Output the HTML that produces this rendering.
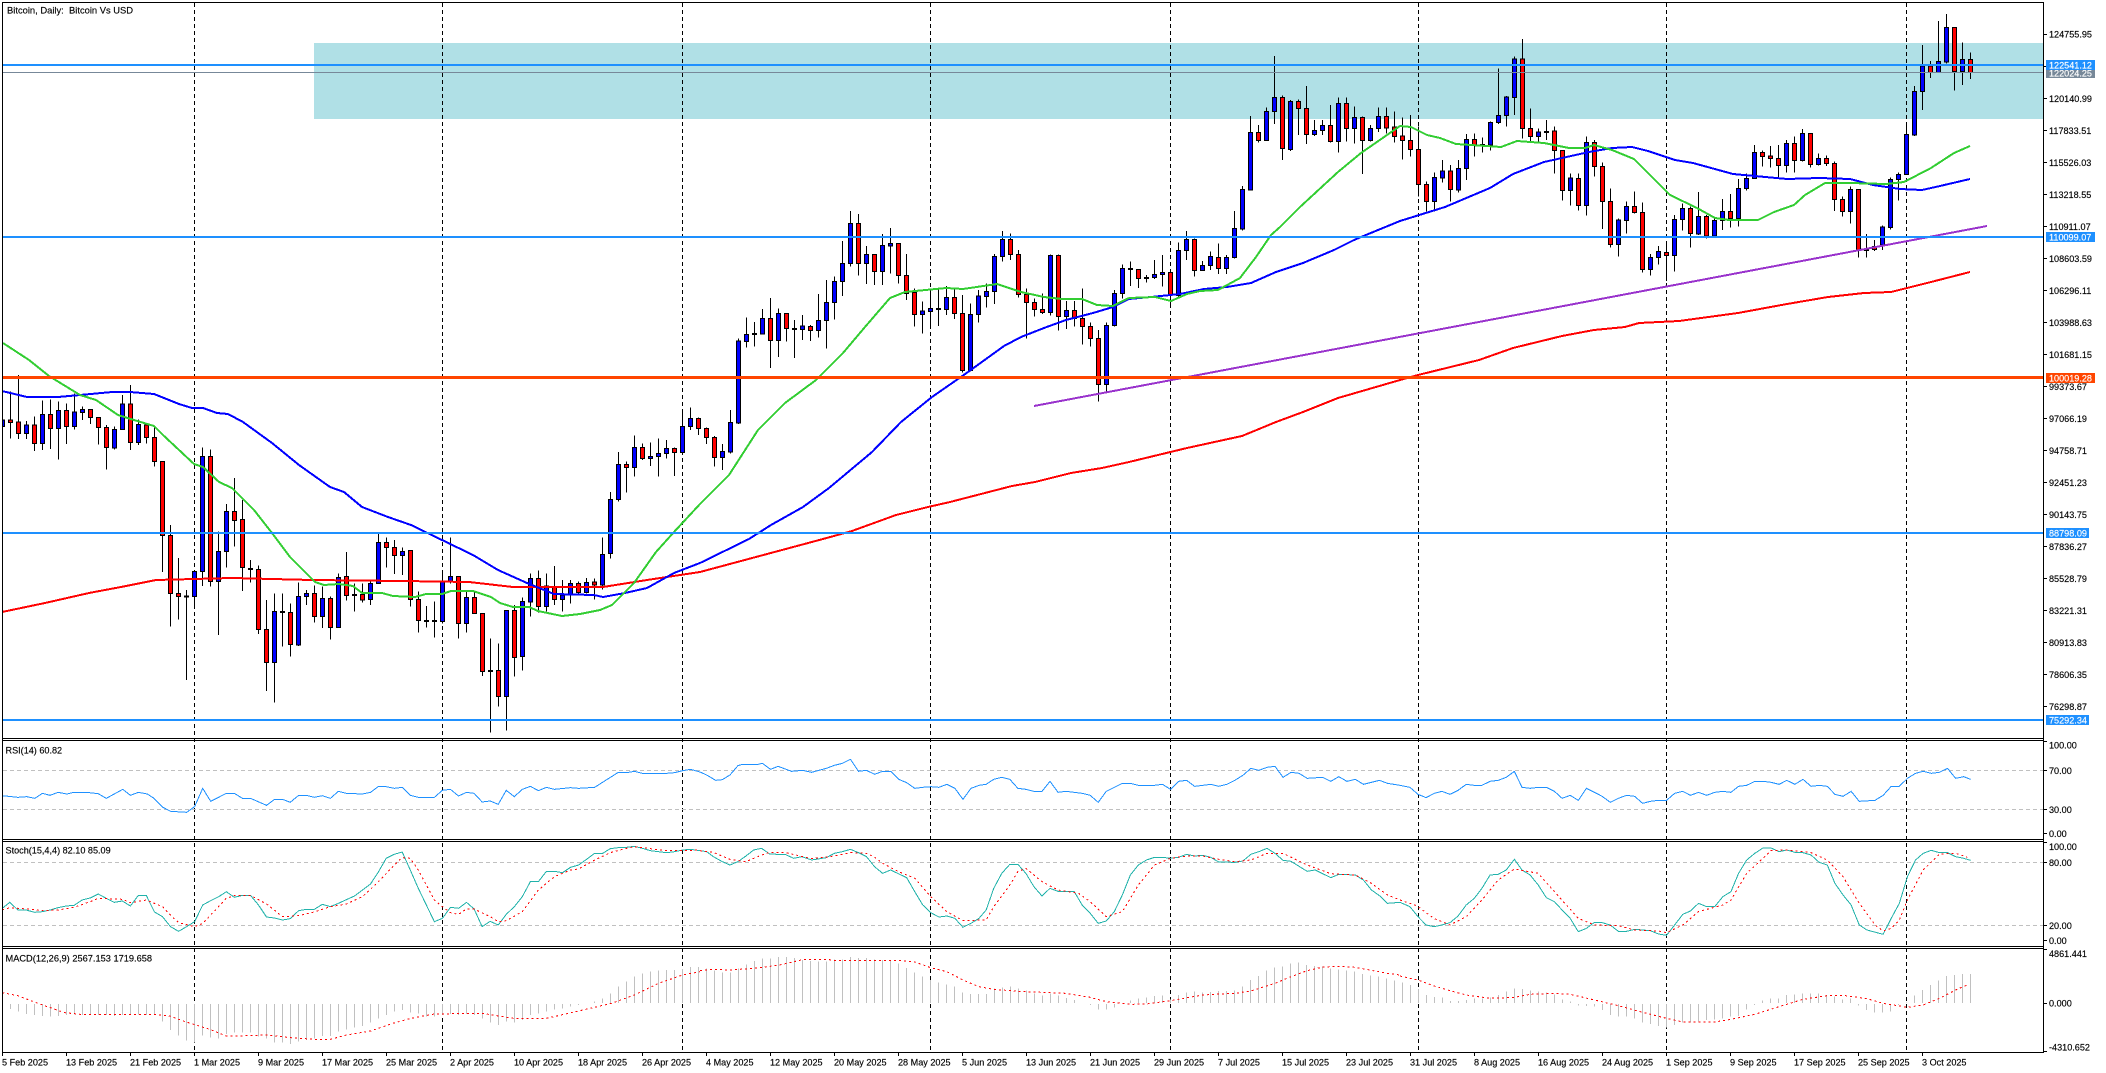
<!DOCTYPE html>
<html><head><meta charset="utf-8"><title>Bitcoin, Daily</title>
<style>
html,body{margin:0;padding:0;background:#fff;width:2106px;height:1073px;overflow:hidden}
svg{display:block;position:absolute;left:0;top:0}
svg *{vector-effect:non-scaling-stroke;shape-rendering:crispEdges}
text{font:9.1px "Liberation Sans",sans-serif;fill:#000;stroke:#000;stroke-width:.15;shape-rendering:auto}
.w{fill:#fff}
polyline{fill:none}
.k{stroke:#000;stroke-width:1;fill:none}
.b{stroke:#000;stroke-width:1;fill:#00f}
.r{stroke:#000;stroke-width:1;fill:#f00}
.rd{stroke:#f00;stroke-width:1;stroke-dasharray:2 3}
.sm{stroke:#20b2aa;stroke-width:1}
.rs{stroke:#1e90ff;stroke-width:1}
.lv{stroke:#c0c0c0;stroke-width:1;stroke-dasharray:4 3;fill:none}
</style></head><body>
<svg width="2106" height="1073" viewBox="0 0 2106 1073" xmlns="http://www.w3.org/2000/svg">
<rect x="314" y="43" width="1729" height="76" fill="#b0e0e6"/>
<path d="M194.5 3V1052M442.5 3V1052M682.5 3V1052M930.5 3V1052M1170.5 3V1052M1418.5 3V1052M1666.5 3V1052M1906.5 3V1052" stroke="#000" stroke-width="1" stroke-dasharray="4 3" fill="none"/>

<g transform="matrix(1 0 0 .33333 0 360)">
<path class="k" d="M2.5 170V205M10.5 95V235M18.5 45V237M26.5 183V237M34.5 170V273M42.5 122V270M50.5 118V267M58.5 125V299M66.5 130V252M74.5 100V208M82.5 140V180M90.5 148V192M98.5 172V254M106.5 195V329M114.5 200V269M122.5 105V210M130.5 75V270M138.5 178V255M146.5 190V250M154.5 200V320M162.5 304V636M170.5 495V800M178.5 594V778M186.5 690V960M194.5 630V735M202.5 262V678M210.5 268V680M218.5 514V825M226.5 432V622M234.5 354V560M242.5 420V693M250.5 600V668M258.5 617V822M266.5 720V993M274.5 700V1028M282.5 700V860M290.5 730V890M298.5 668V858M306.5 690V735M314.5 676V788M322.5 680V804M330.5 710V838M338.5 640V803M346.5 576V722M354.5 670V755M362.5 670V728M370.5 660V735M378.5 522V672M386.5 532V622M394.5 540V642M402.5 562V645M410.5 571V740M418.5 695V818M426.5 738V802M434.5 725V833M442.5 640V790M450.5 532V670M458.5 648V836M466.5 695V818M474.5 695V762M482.5 760V948M490.5 835V1118M498.5 850V1040M506.5 751V1112M514.5 735V950M522.5 712V932M530.5 640V770M538.5 632V758M546.5 640V755M554.5 618V735M562.5 660V755M570.5 660V730M578.5 664V705M586.5 654V700M594.5 655V718M602.5 532V688M610.5 396V596M618.5 276V425M626.5 305V398M634.5 226V350M642.5 250V300M650.5 248V318M658.5 236V350M666.5 240V295M674.5 262V348M682.5 152V280M690.5 142V210M698.5 172V225"/>
<path class="b" d="M.5 180h4V200h-4zM24.5 195h4V221h-4zM40.5 163h4V251h-4zM56.5 151h4V206h-4zM72.5 156h4V200h-4zM80.5 148h4V158h-4zM112.5 208h4V264h-4zM120.5 132h4V208h-4zM136.5 193h4V248h-4zM192.5 634h4V710h-4zM200.5 289h4V635h-4zM216.5 574h4V665h-4zM224.5 454h4V575h-4zM272.5 754h4V908h-4zM296.5 709h4V855h-4zM304.5 700h4V710h-4zM320.5 715h4V770h-4zM336.5 652h4V803h-4zM368.5 670h4V719h-4zM376.5 547h4V670h-4zM400.5 574h4V587h-4zM440.5 665h4V785h-4zM448.5 649h4V665h-4zM464.5 712h4V791h-4zM504.5 751h4V1010h-4zM520.5 724h4V890h-4zM528.5 655h4V726h-4zM544.5 678h4V740h-4zM560.5 705h4V719h-4zM568.5 670h4V705h-4zM584.5 667h4V697h-4zM600.5 583h4V675h-4zM608.5 418h4V581h-4zM616.5 313h4V419h-4zM632.5 262h4V322h-4zM648.5 289h4V295h-4zM656.5 280h4V290h-4zM664.5 265h4V281h-4zM680.5 199h4V277h-4zM688.5 175h4V200h-4z"/>
<path class="r" d="M8.5 180h4V188h-4zM16.5 186h4V221h-4zM32.5 195h4V250h-4zM48.5 163h4V206h-4zM64.5 151h4V200h-4zM88.5 148h4V173h-4zM96.5 172h4V203h-4zM104.5 202h4V263h-4zM128.5 132h4V248h-4zM144.5 195h4V233h-4zM152.5 232h4V305h-4zM160.5 304h4V527h-4zM168.5 526h4V700h-4zM176.5 700h4V710h-4zM184.5 708h4V711h-4zM208.5 289h4V664h-4zM232.5 454h4V482h-4zM240.5 478h4V622h-4zM248.5 625h4V629h-4zM256.5 628h4V808h-4zM264.5 808h4V907h-4zM280.5 754h4V758h-4zM288.5 757h4V854h-4zM312.5 700h4V770h-4zM328.5 715h4V803h-4zM344.5 649h4V707h-4zM352.5 703h4V707h-4zM360.5 703h4V720h-4zM384.5 547h4V563h-4zM392.5 562h4V587h-4zM408.5 571h4V718h-4zM416.5 718h4V782h-4zM424.5 781h4V784h-4zM432.5 781h4V785h-4zM456.5 649h4V791h-4zM472.5 712h4V760h-4zM480.5 760h4V935h-4zM488.5 931h4V935h-4zM496.5 931h4V1010h-4zM512.5 751h4V893h-4zM536.5 655h4V739h-4zM552.5 680h4V719h-4zM576.5 670h4V697h-4zM592.5 666h4V675h-4zM624.5 313h4V323h-4zM640.5 262h4V295h-4zM672.5 265h4V278h-4zM696.5 175h4V205h-4z"/>
</g>

<g transform="matrix(1 0 0 .33333 0 240)">
<path class="k" d="M706.5 562V612M714.5 588V680M722.5 612V690M730.5 510V640M738.5 296V552M746.5 232V322M754.5 246V320M762.5 207V282M770.5 174V384M778.5 205V351M786.5 220V305M794.5 240V354M802.5 225V300M810.5 255V303M818.5 162V292M826.5 120V326M834.5 110V238"/>
<path class="b" d="M720.5 634h4V653h-4zM728.5 547h4V636h-4zM736.5 303h4V549h-4zM744.5 283h4V305h-4zM760.5 235h4V282h-4zM776.5 220h4V302h-4zM800.5 258h4V269h-4zM816.5 241h4V272h-4zM824.5 187h4V242h-4zM832.5 124h4V188h-4z"/>
<path class="r" d="M704.5 565h4V593h-4zM712.5 592h4V653h-4zM752.5 280h4V284h-4zM768.5 235h4V302h-4zM784.5 220h4V265h-4zM792.5 265h4V269h-4zM808.5 259h4V272h-4z"/>
</g>

<g transform="matrix(1 0 0 .33333 0 0)">
<path class="k" d="M842.5 723V888M850.5 633V800M858.5 642V827M866.5 738V852M874.5 763V855M882.5 702V855M890.5 684V820M898.5 730V850M906.5 762V900M914.5 865V980M922.5 905V1000M930.5 875V975M938.5 865V978M946.5 858V945M954.5 868V957M962.5 885V1118M970.5 910V1115M978.5 870V968M986.5 850V922M994.5 762V912M1002.5 693V785M1010.5 700V780M1018.5 750V893M1026.5 865V1015M1034.5 895V950M1042.5 880V942M1050.5 764V947M1058.5 764V992M1066.5 903V987M1074.5 903V980M1082.5 865V1033M1090.5 967V1040M1098.5 990V1205M1106.5 967V1175M1114.5 870V980M1122.5 793V895M1130.5 785V858M1138.5 808V864M1146.5 825V848M1154.5 780V837M1162.5 765V860M1170.5 815V920M1178.5 727V890M1186.5 693V780M1194.5 716V830M1202.5 783V813M1210.5 755V810M1218.5 730V822M1226.5 765V822M1234.5 633V775M1242.5 558V692M1250.5 348V572M1258.5 375V428M1266.5 322V423M1274.5 168V372M1282.5 287V480M1290.5 300V453M1298.5 298V405M1306.5 258V432M1314.5 360V408M1322.5 360V405M1330.5 315V428M1338.5 292V458M1346.5 292V425M1354.5 320V430M1362.5 350V522M1370.5 375V425M1378.5 322V396M1386.5 322V400M1394.5 335V428M1402.5 352V478M1410.5 345V470M1418.5 380V590M1426.5 545V635M1434.5 518V635M1442.5 480V548M1450.5 495V605M1458.5 480V578M1466.5 402V540M1474.5 400V470M1482.5 412V458M1490.5 365V452M1498.5 205V372M1506.5 288V380M1514.5 170V345M1522.5 117V415M1530.5 326V425M1538.5 385V425M1546.5 360V420M1554.5 380V520M1562.5 451V602M1570.5 520V617M1578.5 520V632M1586.5 410V647M1594.5 420V530M1602.5 488V687M1610.5 565V743M1618.5 656V770M1626.5 605V700M1634.5 575V640M1642.5 607V818M1650.5 762V827M1658.5 738V793M1666.5 725V843M1674.5 645V815M1682.5 610V692M1690.5 620V743M1698.5 576V705M1706.5 645V715M1714.5 650V710M1722.5 597V690M1730.5 582V683M1738.5 537V680M1746.5 520V572M1754.5 435V537M1762.5 452V500M1770.5 438V502M1778.5 435V531M1786.5 420V518M1794.5 410V518M1802.5 387V485M1810.5 400V502M1818.5 460V496M1826.5 466V498M1834.5 484V633M1842.5 590V650M1850.5 560V670M1858.5 568V773M1866.5 702V773M1874.5 720V753M1882.5 676V750M1890.5 532V688M1898.5 517V602M1906.5 366V524M1914.5 258V408M1922.5 135V330M1930.5 183V234M1938.5 63V218M1946.5 42V190M1954.5 82V272M1962.5 127V255M1970.5 157V237"/>
<path class="b" d="M840.5 790h4V845h-4zM848.5 670h4V791h-4zM864.5 763h4V791h-4zM880.5 736h4V815h-4zM888.5 730h4V738h-4zM920.5 933h4V943h-4zM928.5 925h4V935h-4zM944.5 892h4V929h-4zM968.5 943h4V1112h-4zM976.5 888h4V943h-4zM984.5 874h4V890h-4zM992.5 769h4V875h-4zM1000.5 718h4V769h-4zM1048.5 766h4V938h-4zM1064.5 931h4V949h-4zM1104.5 976h4V1154h-4zM1112.5 880h4V977h-4zM1120.5 805h4V880h-4zM1152.5 823h4V833h-4zM1160.5 817h4V824h-4zM1176.5 751h4V887h-4zM1184.5 718h4V752h-4zM1200.5 796h4V811h-4zM1208.5 769h4V797h-4zM1224.5 772h4V806h-4zM1232.5 685h4V773h-4zM1240.5 568h4V687h-4zM1248.5 397h4V570h-4zM1264.5 334h4V422h-4zM1272.5 292h4V335h-4zM1288.5 304h4V449h-4zM1312.5 391h4V404h-4zM1320.5 376h4V391h-4zM1336.5 310h4V425h-4zM1352.5 352h4V386h-4zM1368.5 385h4V422h-4zM1376.5 349h4V386h-4zM1432.5 532h4V605h-4zM1440.5 513h4V534h-4zM1456.5 505h4V570h-4zM1464.5 418h4V506h-4zM1488.5 367h4V435h-4zM1496.5 346h4V368h-4zM1504.5 291h4V347h-4zM1512.5 177h4V293h-4zM1536.5 396h4V410h-4zM1568.5 534h4V571h-4zM1584.5 427h4V617h-4zM1616.5 660h4V734h-4zM1624.5 619h4V661h-4zM1648.5 772h4V809h-4zM1656.5 754h4V773h-4zM1672.5 658h4V767h-4zM1680.5 625h4V659h-4zM1696.5 649h4V702h-4zM1712.5 662h4V708h-4zM1720.5 634h4V662h-4zM1736.5 566h4V656h-4zM1744.5 535h4V566h-4zM1752.5 457h4V536h-4zM1784.5 430h4V497h-4zM1800.5 400h4V482h-4zM1816.5 475h4V494h-4zM1848.5 568h4V635h-4zM1864.5 748h4V752h-4zM1880.5 681h4V735h-4zM1888.5 538h4V683h-4zM1896.5 523h4V539h-4zM1904.5 403h4V523h-4zM1912.5 274h4V405h-4zM1920.5 198h4V275h-4zM1936.5 184h4V218h-4zM1944.5 82h4V186h-4zM1960.5 178h4V215h-4z"/>
<path class="r" d="M856.5 670h4V790h-4zM872.5 763h4V815h-4zM896.5 730h4V827h-4zM904.5 826h4V880h-4zM912.5 877h4V943h-4zM936.5 925h4V929h-4zM952.5 892h4V940h-4zM960.5 940h4V1112h-4zM1008.5 718h4V763h-4zM1016.5 763h4V884h-4zM1024.5 883h4V907h-4zM1032.5 907h4V928h-4zM1040.5 928h4V938h-4zM1056.5 766h4V949h-4zM1072.5 931h4V955h-4zM1080.5 955h4V980h-4zM1088.5 979h4V1016h-4zM1096.5 1015h4V1154h-4zM1128.5 805h4V809h-4zM1136.5 808h4V836h-4zM1144.5 832h4V836h-4zM1168.5 817h4V885h-4zM1192.5 718h4V812h-4zM1216.5 772h4V806h-4zM1256.5 397h4V422h-4zM1280.5 292h4V445h-4zM1296.5 304h4V326h-4zM1304.5 325h4V404h-4zM1328.5 376h4V425h-4zM1344.5 310h4V385h-4zM1360.5 352h4V422h-4zM1384.5 349h4V384h-4zM1392.5 381h4V410h-4zM1400.5 408h4V422h-4zM1408.5 422h4V449h-4zM1416.5 448h4V554h-4zM1424.5 553h4V605h-4zM1448.5 513h4V569h-4zM1472.5 418h4V435h-4zM1480.5 433h4V436h-4zM1520.5 177h4V385h-4zM1528.5 385h4V410h-4zM1544.5 394h4V398h-4zM1552.5 393h4V452h-4zM1560.5 451h4V571h-4zM1576.5 535h4V617h-4zM1592.5 427h4V500h-4zM1600.5 499h4V604h-4zM1608.5 604h4V734h-4zM1632.5 619h4V638h-4zM1640.5 637h4V808h-4zM1664.5 757h4V767h-4zM1688.5 625h4V701h-4zM1704.5 649h4V708h-4zM1728.5 634h4V656h-4zM1760.5 457h4V470h-4zM1768.5 468h4V475h-4zM1776.5 475h4V497h-4zM1792.5 430h4V482h-4zM1808.5 400h4V494h-4zM1824.5 475h4V491h-4zM1832.5 490h4V599h-4zM1840.5 598h4V635h-4zM1856.5 568h4V750h-4zM1872.5 740h4V748h-4zM1928.5 198h4V218h-4zM1952.5 82h4V215h-4zM1968.5 178h4V218h-4z"/>
</g>

<polyline stroke="#ff0000" stroke-width="2" points="2,612 45,603 89,593 121,587 156,580 232,578 312,580 402,581 469,582 513,587 603,587 647,580 700,572 823,539 852,531 896,515 928,507 950,502 1012,486 1035,482 1071,473 1102,468 1129,462 1187,448 1242,436 1276,422 1303,412 1338,398 1400,380 1418,375 1479,360 1513,348 1562,336 1594,330 1625,327 1639,323 1679,321 1738,313 1787,304 1828,297 1864,293 1891,292 1931,282 1970,272"/>
<polyline stroke="#0000ff" stroke-width="2" points="2,391 27,397 58,397 80,395 112,392 130,392 154,394 179,404 192,408 203,408 217,413 228,414 243,422 272,443 299,465 330,487 344,492 362,507 388,517 411,525 442,540 473,555 498,570 527,583 554,594 594,595 603,597 625,593 647,588 674,573 700,563 749,539 771,525 803,507 829,488 872,452 901,422 932,397 968,372 1004,346 1021,337 1044,328 1066,320 1093,313 1113,307 1129,299 1151,297 1180,294 1204,289 1227,287 1251,283 1276,272 1303,263 1334,250 1354,240 1361,237 1400,221 1445,207 1490,188 1513,174 1544,162 1589,152 1612,148 1632,147 1648,151 1675,160 1693,163 1733,174 1787,179 1819,178 1850,179 1873,185 1900,189 1922,190 1940,186 1970,179"/>
<polyline stroke="#32cd32" stroke-width="2" points="3,343 29,360 49,376 80,395 96,400 118,415 134,420 154,426 163,435 194,464 203,467 219,482 232,488 254,510 272,533 290,557 315,582 324,585 339,584 353,586 362,593 382,593 393,596 415,597 426,594 442,594 451,591 473,591 491,597 500,603 513,607 529,607 538,611 562,616 580,614 600,610 612,605 634,583 656,552 674,532 700,504 729,475 758,430 785,403 816,380 843,353 865,327 890,298 905,292 946,288 963,289 997,284 1021,292 1044,297 1062,299 1082,299 1097,305 1113,306 1129,298 1155,297 1171,301 1187,294 1200,291 1218,290 1240,278 1256,257 1271,235 1280,227 1300,207 1338,172 1361,153 1400,126 1411,127 1427,135 1440,138 1456,144 1501,147 1517,141 1544,143 1569,148 1585,148 1594,145 1612,150 1634,159 1648,173 1670,195 1697,208 1715,218 1729,220 1758,220 1774,212 1794,205 1805,195 1825,183 1850,183 1886,184 1904,182 1931,168 1954,153 1970,146"/>
<line x1="1034" y1="406" x2="1987" y2="226" stroke="#9932cc" stroke-width="2"/>

<rect x="2" y="64" width="2041" height="2" fill="#1e90ff"/>
<rect x="2" y="72" width="2041" height="1" fill="#778899"/>
<rect x="2" y="236" width="2041" height="2" fill="#1e90ff"/>
<rect x="2" y="376" width="2041" height="3" fill="#ff4500"/>
<rect x="2" y="532" width="2041" height="2" fill="#1e90ff"/>
<rect x="2" y="719" width="2041" height="2" fill="#1e90ff"/>

<path class="lv" d="M3 770.5H2043M3 809.5H2043M3 862.5H2043M3 925.5H2043"/>

<g transform="matrix(.44643 0 0 .33333 0 730)">
<polyline class="rs" points="5,197 40,202 60,200 78,205 95,190 112,196 130,187 150,192 165,187 200,188 220,191 238,205 275,178 292,196 310,187 330,192 345,205 365,232 382,244 418,247 436,230 454,175 472,214 507,190 525,190 543,205 561,205 597,226 615,208 633,208 650,217 669,196 686,196 704,202 722,197 740,205 758,184 776,190 812,192 830,187 848,169 865,170 883,175 901,172 919,196 937,202 973,202 991,181 1009,178 1027,198 1045,187 1062,190 1080,216 1098,213 1116,223 1134,181 1152,200 1170,178 1188,169 1206,182 1224,172 1242,178 1278,173 1296,175 1332,172 1385,127 1403,128 1421,124 1439,130 1493,130 1511,128 1529,122 1547,118 1568,126"/>
<polyline class="sm" points="5,535 22,517 40,540 58,540 78,547 95,545 112,540 130,533 148,528 166,526 184,510 202,504 220,492 238,505 256,517 274,513 292,528 310,496 328,497 346,546 364,560 382,590 400,604 418,590 436,575 454,525 472,512 490,500 507,485 525,502 543,496 561,496 579,525 597,561 615,564 633,570 650,566 669,542 686,538 704,538 722,523 740,530 758,520 776,509 794,498 812,480 830,462 848,425 865,385 883,373 901,366 919,420 937,475 955,525 973,575 991,565 1009,532 1027,535 1045,517 1062,537 1080,590 1098,574 1116,585 1134,553 1152,530 1170,500 1188,455 1206,455 1224,424 1242,424 1260,428 1278,412 1296,405 1314,388 1332,370 1350,370 1367,356 1385,353 1403,352 1421,349 1439,355 1457,362 1475,365 1493,368 1511,365 1529,360 1547,358 1568,362"/>
<polyline class="rd" points="5,540 22,533 60,537 95,542 130,540 166,532 202,515 220,505 275,508 292,518 328,510 364,530 382,555 400,578 436,590 454,580 472,555 507,505 525,497 561,496 597,522 633,560 669,557 704,546 740,530 776,522 812,500 848,455 883,405 901,383 919,385 937,420 955,465 973,510 991,530 1009,548 1027,553 1045,537 1062,537 1098,560 1116,575 1134,572 1170,545 1206,480 1242,440 1278,420 1296,417 1332,390 1367,368 1403,355 1421,350 1457,356 1493,362 1529,362 1568,360"/>
</g>
<g transform="matrix(.44643 0 0 .33333 700 730)">
<polyline class="rs" points="0,126 15,135 35,151 50,149 67,135 85,107 95,103 130,103 140,100 158,118 175,109 205,124 230,121 250,127 283,115 301,106 319,100 337,88 355,124 373,121 391,133 409,124 427,124 445,148 463,158 481,175 499,172 517,170 535,172 553,163 571,175 589,208 607,175 625,166 641,163 658,148 676,142 694,148 712,175 730,178 748,184 766,184 784,154 802,187 820,184 838,187 856,190 874,196 892,217 910,184 928,172 946,160 964,160 982,166 1018,166 1036,163 1054,178 1072,154 1090,151 1108,169 1126,166 1144,163 1162,169 1180,163 1198,151 1216,136 1234,115 1252,121 1270,112 1288,109 1306,142 1324,127 1342,130 1360,145 1395,142 1413,154 1431,140 1449,154 1468,148 1486,163 1504,157 1522,151 1540,160 1568,166"/>
<polyline class="sm" points="0,362 15,365 30,380 50,395 67,405 85,395 103,378 120,360 138,355 156,372 192,374 210,385 228,380 250,390 283,383 301,370 319,365 337,358 355,368 373,380 391,410 409,430 427,420 463,443 481,485 499,525 517,548 535,561 553,558 571,565 589,592 607,580 625,565 641,540 658,475 676,430 694,403 712,403 730,430 748,470 766,498 784,475 802,484 838,484 856,525 874,550 892,580 910,573 928,545 946,495 964,435 982,405 1000,390 1018,382 1036,382 1054,385 1072,382 1090,373 1108,378 1126,376 1144,382 1162,396 1198,397 1216,393 1234,373 1252,365 1270,355 1288,370 1306,391 1324,394 1360,424 1378,420 1413,443 1431,433 1468,435 1486,450 1504,480 1522,497 1540,520 1568,517"/>
<polyline class="rd" points="0,362 30,367 67,388 103,395 138,375 156,367 192,368 250,386 301,378 337,368 373,370 391,382 409,400 445,425 481,445 517,500 553,545 589,572 641,570 658,530 694,465 712,425 730,415 766,455 802,480 848,490 874,515 910,560 946,545 982,465 1018,405 1054,385 1090,378 1126,378 1162,388 1198,395 1234,390 1270,370 1306,370 1360,405 1413,431 1468,435 1504,460 1540,495 1568,510"/>
</g>
<g transform="matrix(.45025 0 0 .33333 1400 730)">
<polyline class="rs" points="0,166 22,172 40,193 58,203 76,190 93,184 111,193 129,181 147,163 165,166 182,166 200,154 218,151 236,142 254,124 271,172 289,175 307,172 325,172 343,184 360,205 378,196 396,211 414,175 432,187 449,199 467,217 485,205 503,196 521,199 539,220 556,214 574,211 592,211 610,190 628,184 645,196 663,187 681,196 699,187 717,184 735,187 752,169 770,166 788,154 806,154 824,157 842,163 859,151 877,163 895,148 913,169 931,166 949,169 966,193 984,199 1002,184 1020,214 1055,211 1073,196 1091,169 1109,169 1127,145 1145,130 1162,124 1180,130 1198,127 1216,115 1234,145 1252,140 1267,148"/>
<polyline class="sm" points="0,517 22,530 40,560 58,585 76,590 93,585 111,578 129,558 147,525 165,505 182,475 200,435 218,433 236,420 254,388 271,420 289,435 307,465 325,503 343,515 360,540 378,565 396,605 414,595 432,577 449,578 467,585 485,604 503,604 521,598 539,600 556,602 574,612 592,616 610,585 628,553 645,543 663,520 681,530 699,530 717,500 735,485 752,430 770,390 788,370 806,354 824,354 842,365 859,360 877,367 895,368 913,375 931,397 949,405 966,460 984,495 1002,525 1020,585 1037,600 1073,613 1091,565 1109,520 1127,440 1145,390 1162,370 1180,361 1198,368 1216,368 1234,380 1252,385 1267,391"/>
<polyline class="rd" points="0,510 37,527 75,565 111,585 147,560 182,510 218,450 254,417 307,430 343,485 396,565 432,585 485,587 521,600 574,603 592,608 628,585 663,545 717,525 735,510 770,430 806,385 824,362 859,360 913,368 949,390 984,440 1020,520 1055,585 1073,603 1091,595 1109,570 1127,510 1162,420 1198,372 1234,370 1252,378 1260,382"/>
</g>

<g transform="matrix(1 0 0 .33333 0 730)">
<path fill="none" stroke="#c0c0c0" stroke-width="1" d="M10.5 822V837M18.5 822V845M26.5 822V852M34.5 822V855M42.5 822V858M50.5 822V860M58.5 822V858M66.5 822V855M74.5 822V853M82.5 822V855M90.5 822V855M98.5 822V855M106.5 822V855M114.5 822V858M122.5 822V855M130.5 822V853M138.5 822V853M146.5 822V855M154.5 822V853M162.5 822V875M170.5 822V900M178.5 822V917M186.5 822V932M194.5 822V938M202.5 822V917M210.5 822V922M218.5 822V925M226.5 822V912M234.5 822V908M242.5 822V908M250.5 822V908M258.5 822V920M266.5 822V925M274.5 822V938M282.5 822V938M290.5 822V942M298.5 822V935M306.5 822V930M314.5 822V925M322.5 822V918M330.5 822V918M338.5 822V905M346.5 822V898M354.5 822V892M362.5 822V888M370.5 822V878M378.5 822V865M386.5 822V855M394.5 822V845M402.5 822V840M410.5 822V848M418.5 822V850M426.5 822V860M434.5 822V860M442.5 822V855M450.5 822V852M458.5 822V855M466.5 822V852M474.5 822V855M482.5 822V865M490.5 822V878M498.5 822V885M506.5 822V875M514.5 822V878M522.5 822V870M530.5 822V855M538.5 822V850M546.5 822V845M554.5 822V838M562.5 822V835M570.5 822V830M578.5 822V825M594.5 819V815M602.5 819V806M610.5 819V790M618.5 819V770M626.5 819V755M634.5 819V740M642.5 819V730M650.5 819V725M658.5 819V722M666.5 819V720M674.5 819V720M682.5 819V717M690.5 819V711M698.5 819V711M706.5 819V715M714.5 819V722M722.5 819V727M730.5 819V728M738.5 819V715M746.5 819V703M754.5 819V693M762.5 819V685M770.5 819V685M778.5 819V681M786.5 819V681M794.5 819V684M802.5 819V690M810.5 819V693M818.5 819V695M826.5 819V695M834.5 819V688M842.5 819V688M850.5 819V681M858.5 819V684M866.5 819V684M874.5 819V688M882.5 819V690M890.5 819V692M898.5 819V700M906.5 819V714M914.5 819V728M922.5 819V740M930.5 819V750M938.5 819V758M946.5 819V764M954.5 819V770M962.5 819V788M970.5 819V792M978.5 819V792M986.5 819V792M994.5 819V776M1002.5 819V772M1010.5 819V770M1018.5 819V776M1026.5 819V782M1034.5 819V790M1042.5 819V797M1050.5 819V790M1058.5 819V797M1066.5 819V804M1074.5 819V810M1090.5 822V825M1098.5 822V838M1106.5 822V838M1114.5 822V832M1130.5 819V812M1138.5 819V805M1146.5 819V803M1154.5 819V798M1162.5 819V797M1170.5 819V808M1178.5 819V795M1186.5 819V788M1194.5 819V785M1202.5 819V787M1210.5 819V786M1218.5 819V783M1226.5 819V783M1234.5 819V782M1242.5 819V770M1250.5 819V750M1258.5 819V738M1266.5 819V722M1274.5 819V712M1282.5 819V710M1290.5 819V700M1298.5 819V698M1306.5 819V705M1314.5 819V708M1322.5 819V710M1330.5 819V715M1338.5 819V718M1346.5 819V722M1354.5 819V725M1362.5 819V732M1370.5 819V737M1378.5 819V740M1386.5 819V746M1394.5 819V752M1402.5 819V758M1410.5 819V765M1418.5 819V777M1426.5 819V795M1434.5 819V801M1442.5 819V803M1450.5 819V813M1458.5 819V813M1466.5 819V810M1474.5 819V805M1482.5 819V805M1490.5 819V803M1498.5 819V795M1506.5 819V785M1514.5 819V775M1522.5 819V777M1530.5 819V782M1538.5 819V785M1546.5 819V788M1554.5 819V793M1562.5 819V808M1570.5 819V815M1578.5 822V826M1586.5 822V828M1594.5 822V830M1602.5 822V840M1610.5 822V855M1618.5 822V860M1626.5 822V860M1634.5 822V865M1642.5 822V878M1650.5 822V882M1658.5 822V888M1666.5 822V892M1674.5 822V885M1682.5 822V877M1690.5 822V878M1698.5 822V875M1706.5 822V870M1714.5 822V868M1722.5 822V865M1730.5 822V860M1738.5 822V858M1746.5 822V838M1754.5 822V825M1762.5 819V812M1770.5 819V805M1778.5 819V805M1786.5 819V795M1794.5 819V793M1802.5 819V790M1810.5 819V790M1818.5 819V790M1826.5 819V795M1834.5 819V800M1842.5 819V808M1850.5 819V805M1858.5 822V826M1866.5 822V840M1874.5 822V848M1882.5 822V848M1890.5 822V845M1898.5 822V825M1906.5 819V818M1914.5 819V797M1922.5 819V780M1930.5 819V765M1938.5 819V752M1946.5 819V738M1954.5 819V735M1962.5 819V732M1970.5 819V732"/>
</g>
<g transform="matrix(.44643 0 0 .33333 0 730)">
<polyline class="rd" points="5,788 40,797 75,815 110,832 145,848 180,853 345,853 380,858 415,875 470,898 507,918 561,917 597,915 650,923 704,928 740,928 776,915 830,903 880,880 920,865 973,852 1080,850 1150,865 1224,865 1296,843 1370,820 1421,795 1475,760 1529,735 1568,725"/>
</g>
<g transform="matrix(.44643 0 0 .33333 700 730)">
<polyline class="rd" points="0,722 30,718 67,720 120,715 175,706 230,689 283,688 301,691 445,691 481,696 517,713 553,725 589,750 625,770 658,778 712,784 820,790 874,802 910,815 964,823 1000,822 1054,812 1126,795 1198,790 1234,783 1288,760 1324,740 1360,722 1396,711 1431,709 1468,712 1540,730 1568,735"/>
</g>
<g transform="matrix(.45025 0 0 .33333 1400 730)">
<polyline class="rd" points="0,738 40,750 76,768 111,782 147,795 200,805 254,802 289,793 343,790 378,793 432,810 485,827 539,847 592,865 628,876 699,876 735,868 788,853 842,830 895,808 949,797 984,796 1037,806 1073,820 1127,832 1162,825 1198,805 1234,780 1260,765"/>
</g>

<rect x="0" y="0" width="2" height="1073" fill="#fff"/>
<path fill="none" stroke="#000" stroke-width="1" d="M2.5 2.5H2043.5V1052.5H2.5ZM2.5 738.5H2043.5M2.5 740.5H2043.5M2.5 839.5H2043.5M2.5 841.5H2043.5M2.5 946.5H2043.5M2.5 948.5H2043.5"/>
<path fill="none" stroke="#000" stroke-width="1" d="M2043 34.5h4M2043 66.5h4M2043 98.5h4M2043 130.5h4M2043 162.5h4M2043 194.5h4M2043 226.5h4M2043 258.5h4M2043 290.5h4M2043 322.5h4M2043 354.5h4M2043 386.5h4M2043 418.5h4M2043 450.5h4M2043 482.5h4M2043 514.5h4M2043 546.5h4M2043 578.5h4M2043 610.5h4M2043 642.5h4M2043 674.5h4M2043 706.5h4M2043 741.5h4M2043 770.5h4M2043 809.5h4M2043 833.5h4M2043 842.5h4M2043 862.5h4M2043 925.5h4M2043 940.5h4M2043 949.5h4M2043 1003.5h4M2043 1051.5h4M2.5 1052v4M66.5 1052v4M130.5 1052v4M194.5 1052v4M258.5 1052v4M322.5 1052v4M386.5 1052v4M450.5 1052v4M514.5 1052v4M578.5 1052v4M642.5 1052v4M706.5 1052v4M770.5 1052v4M834.5 1052v4M898.5 1052v4M962.5 1052v4M1026.5 1052v4M1090.5 1052v4M1154.5 1052v4M1218.5 1052v4M1282.5 1052v4M1346.5 1052v4M1410.5 1052v4M1474.5 1052v4M1538.5 1052v4M1602.5 1052v4M1666.5 1052v4M1730.5 1052v4M1794.5 1052v4M1858.5 1052v4M1922.5 1052v4"/>

<text x="7" y="13.5" style="font-size:9.4px">Bitcoin, Daily:&#160; Bitcoin Vs USD</text>
<text x="5.5" y="753.5">RSI(14) 60.82</text>
<text x="5.5" y="853.5">Stoch(15,4,4) 82.10 85.09</text>
<text x="5.5" y="961.5" style="font-size:9.25px">MACD(12,26,9) 2567.153 1719.658</text>

<g>
<text x="2049" y="37.5">124755.95</text>
<text x="2049" y="102">120140.99</text>
<text x="2049" y="134">117833.51</text>
<text x="2049" y="166">115526.03</text>
<text x="2049" y="198">113218.55</text>
<text x="2049" y="230">110911.07</text>
<text x="2049" y="262">108603.59</text>
<text x="2049" y="294">106296.11</text>
<text x="2049" y="326">103988.63</text>
<text x="2049" y="358">101681.15</text>
<text x="2049" y="390">99373.67</text>
<text x="2049" y="422">97066.19</text>
<text x="2049" y="454">94758.71</text>
<text x="2049" y="486">92451.23</text>
<text x="2049" y="518">90143.75</text>
<text x="2049" y="550">87836.27</text>
<text x="2049" y="582">85528.79</text>
<text x="2049" y="614">83221.31</text>
<text x="2049" y="646">80913.83</text>
<text x="2049" y="678">78606.35</text>
<text x="2049" y="710">76298.87</text>
<text x="2049" y="748.5">100.00</text>
<text x="2049" y="774">70.00</text>
<text x="2049" y="813">30.00</text>
<text x="2049" y="837">0.00</text>
<text x="2049" y="850">100.00</text>
<text x="2049" y="866">80.00</text>
<text x="2049" y="929">20.00</text>
<text x="2049" y="944">0.00</text>
<text x="2049" y="957">4861.441</text>
<text x="2049" y="1006.5">0.000</text>
<text x="2049" y="1050.5">-4310.652</text>
</g>

<rect x="2046" y="67" width="49" height="11" fill="#778899"/>
<text x="2049" y="76.5" style="fill:#fff;stroke:#fff">122024.25</text>
<rect x="2046" y="60" width="49" height="10" fill="#1e90ff"/>
<text x="2049" y="68.5" style="fill:#fff;stroke:#fff">122541.12</text>
<rect x="2046" y="232" width="49" height="10" fill="#1e90ff"/>
<text x="2049" y="240.5" style="fill:#fff;stroke:#fff">110099.07</text>
<rect x="2046" y="373" width="49" height="10" fill="#ff4500"/>
<text x="2049" y="381.5" style="fill:#fff;stroke:#fff">100019.28</text>
<rect x="2046" y="528" width="43" height="10" fill="#1e90ff"/>
<text x="2049" y="536.5" style="fill:#fff;stroke:#fff">88798.09</text>
<rect x="2046" y="715" width="43" height="10" fill="#1e90ff"/>
<text x="2049" y="723.5" style="fill:#fff;stroke:#fff">75292.34</text>

<g>
<text x="2" y="1065.5">5 Feb 2025</text>
<text x="66" y="1065.5">13 Feb 2025</text>
<text x="130" y="1065.5">21 Feb 2025</text>
<text x="194" y="1065.5">1 Mar 2025</text>
<text x="258" y="1065.5">9 Mar 2025</text>
<text x="322" y="1065.5">17 Mar 2025</text>
<text x="386" y="1065.5">25 Mar 2025</text>
<text x="450" y="1065.5">2 Apr 2025</text>
<text x="514" y="1065.5">10 Apr 2025</text>
<text x="578" y="1065.5">18 Apr 2025</text>
<text x="642" y="1065.5">26 Apr 2025</text>
<text x="706" y="1065.5">4 May 2025</text>
<text x="770" y="1065.5">12 May 2025</text>
<text x="834" y="1065.5">20 May 2025</text>
<text x="898" y="1065.5">28 May 2025</text>
<text x="962" y="1065.5">5 Jun 2025</text>
<text x="1026" y="1065.5">13 Jun 2025</text>
<text x="1090" y="1065.5">21 Jun 2025</text>
<text x="1154" y="1065.5">29 Jun 2025</text>
<text x="1218" y="1065.5">7 Jul 2025</text>
<text x="1282" y="1065.5">15 Jul 2025</text>
<text x="1346" y="1065.5">23 Jul 2025</text>
<text x="1410" y="1065.5">31 Jul 2025</text>
<text x="1474" y="1065.5">8 Aug 2025</text>
<text x="1538" y="1065.5">16 Aug 2025</text>
<text x="1602" y="1065.5">24 Aug 2025</text>
<text x="1666" y="1065.5">1 Sep 2025</text>
<text x="1730" y="1065.5">9 Sep 2025</text>
<text x="1794" y="1065.5">17 Sep 2025</text>
<text x="1858" y="1065.5">25 Sep 2025</text>
<text x="1922" y="1065.5">3 Oct 2025</text>
</g>
</svg>
</body></html>
